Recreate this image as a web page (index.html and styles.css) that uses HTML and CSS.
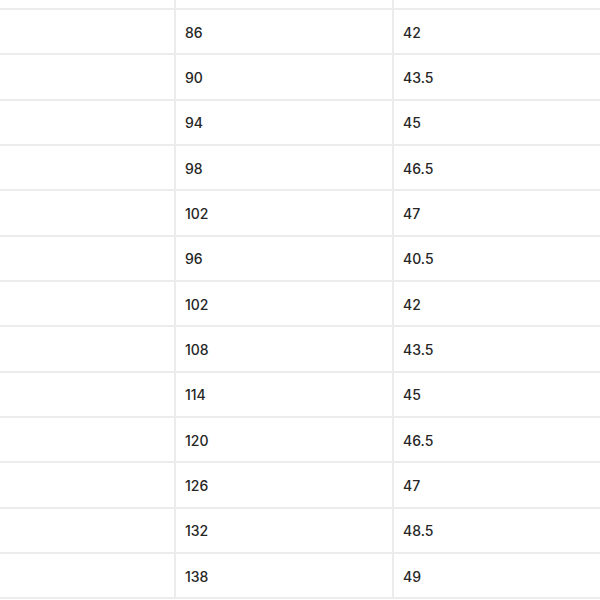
FILE: index.html
```html
<!DOCTYPE html>
<html>
<head>
<meta charset="utf-8">
<link rel="stylesheet" href="styles.css">
</head>
<body>
<div class="table">
  <div class="cell top"></div><div class="cell top col"></div><div class="cell top col"></div>
  <div class="cell"></div><div class="cell col">86</div><div class="cell col">42</div>
  <div class="cell"></div><div class="cell col">90</div><div class="cell col">43.5</div>
  <div class="cell"></div><div class="cell col">94</div><div class="cell col">45</div>
  <div class="cell"></div><div class="cell col">98</div><div class="cell col">46.5</div>
  <div class="cell"></div><div class="cell col">102</div><div class="cell col">47</div>
  <div class="cell"></div><div class="cell col">96</div><div class="cell col">40.5</div>
  <div class="cell"></div><div class="cell col">102</div><div class="cell col">42</div>
  <div class="cell"></div><div class="cell col">108</div><div class="cell col">43.5</div>
  <div class="cell"></div><div class="cell col">114</div><div class="cell col">45</div>
  <div class="cell"></div><div class="cell col">120</div><div class="cell col">46.5</div>
  <div class="cell"></div><div class="cell col">126</div><div class="cell col">47</div>
  <div class="cell"></div><div class="cell col">132</div><div class="cell col">48.5</div>
  <div class="cell"></div><div class="cell col">138</div><div class="cell col">49</div>
</div>
</body>
</html>
```
FILE: styles.css
```css
html, body {
  margin: 0;
  padding: 0;
  background: #ffffff;
}
body {
  width: 600px;
  height: 600px;
  overflow: hidden;
}
.table {
  display: grid;
  grid-template-columns: 174px 218px 208px;
  grid-template-rows: 10px;
  grid-auto-rows: 45.33px;
  font-family: "Inter", "Liberation Sans", sans-serif;
  font-size: 14px;
  font-weight: 500;
  color: #262626;
}
.cell {
  box-sizing: border-box;
  border-bottom: 2px solid #ececec;
  display: flex;
  align-items: center;
  padding-left: 9px;
  padding-top: 1px;
}
.col {
  border-left: 2px solid #ececec;
}
.top {
  padding: 0;
}
```
